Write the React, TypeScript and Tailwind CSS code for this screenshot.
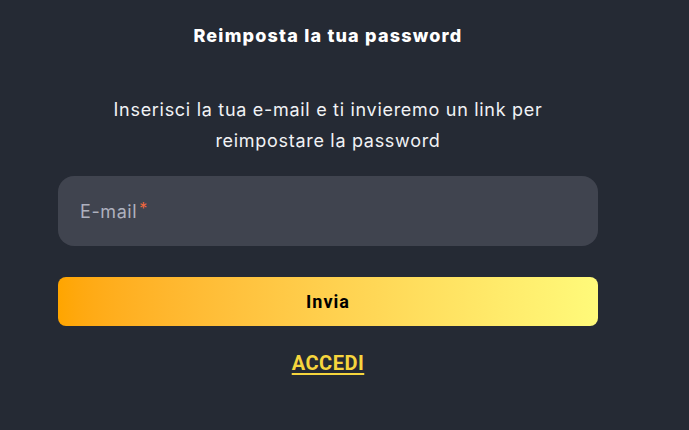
export default function App() {
  return (
    <div
      className="h-[430px] w-[689px] bg-[#252a34] text-white"
      style={{ fontFamily: "Inter, 'Noto Sans', sans-serif" }}
    >
      <div className="ml-[58px] flex w-[540px] flex-col items-center">
        <h1 className="mt-[25px] text-[18px] font-extrabold leading-[22px] tracking-[1.2px]">
          Reimposta la tua password
        </h1>
        <p className="mt-[47px] w-[470px] text-center text-[18px] leading-[31px] tracking-[0.7px] text-[#f1f2f5]">
          Inserisci la tua e-mail e ti invieremo un link per reimpostare la password
        </p>
        <div className="mt-[20px] flex h-[70px] w-full items-center rounded-[16px] bg-[#40444f] px-[22px]">
          <span className="text-[18px] tracking-[0.6px] text-[#aeb1be]">E-mail</span>
          <span className="-mt-[6px] ml-[2px] text-[16px] text-[#f0673e]">*</span>
        </div>
        <button
          type="button"
          className="mt-[31px] h-[49px] w-full rounded-[8px] bg-gradient-to-r from-[#ffa500] to-[#fffa7a] text-[18px] font-bold tracking-[1px] text-black"
          style={{ fontFamily: "Roboto, 'Liberation Sans', sans-serif" }}
        >
          Invia
        </button>
        <a
          href="#"
          className="mt-[22px] text-[20px] font-bold tracking-[0.5px] text-[#f6d53d] underline decoration-[2px] underline-offset-[3px]"
          style={{ fontFamily: "Roboto, 'Liberation Sans', sans-serif" }}
        >
          ACCEDI
        </a>
      </div>
    </div>
  );
}
